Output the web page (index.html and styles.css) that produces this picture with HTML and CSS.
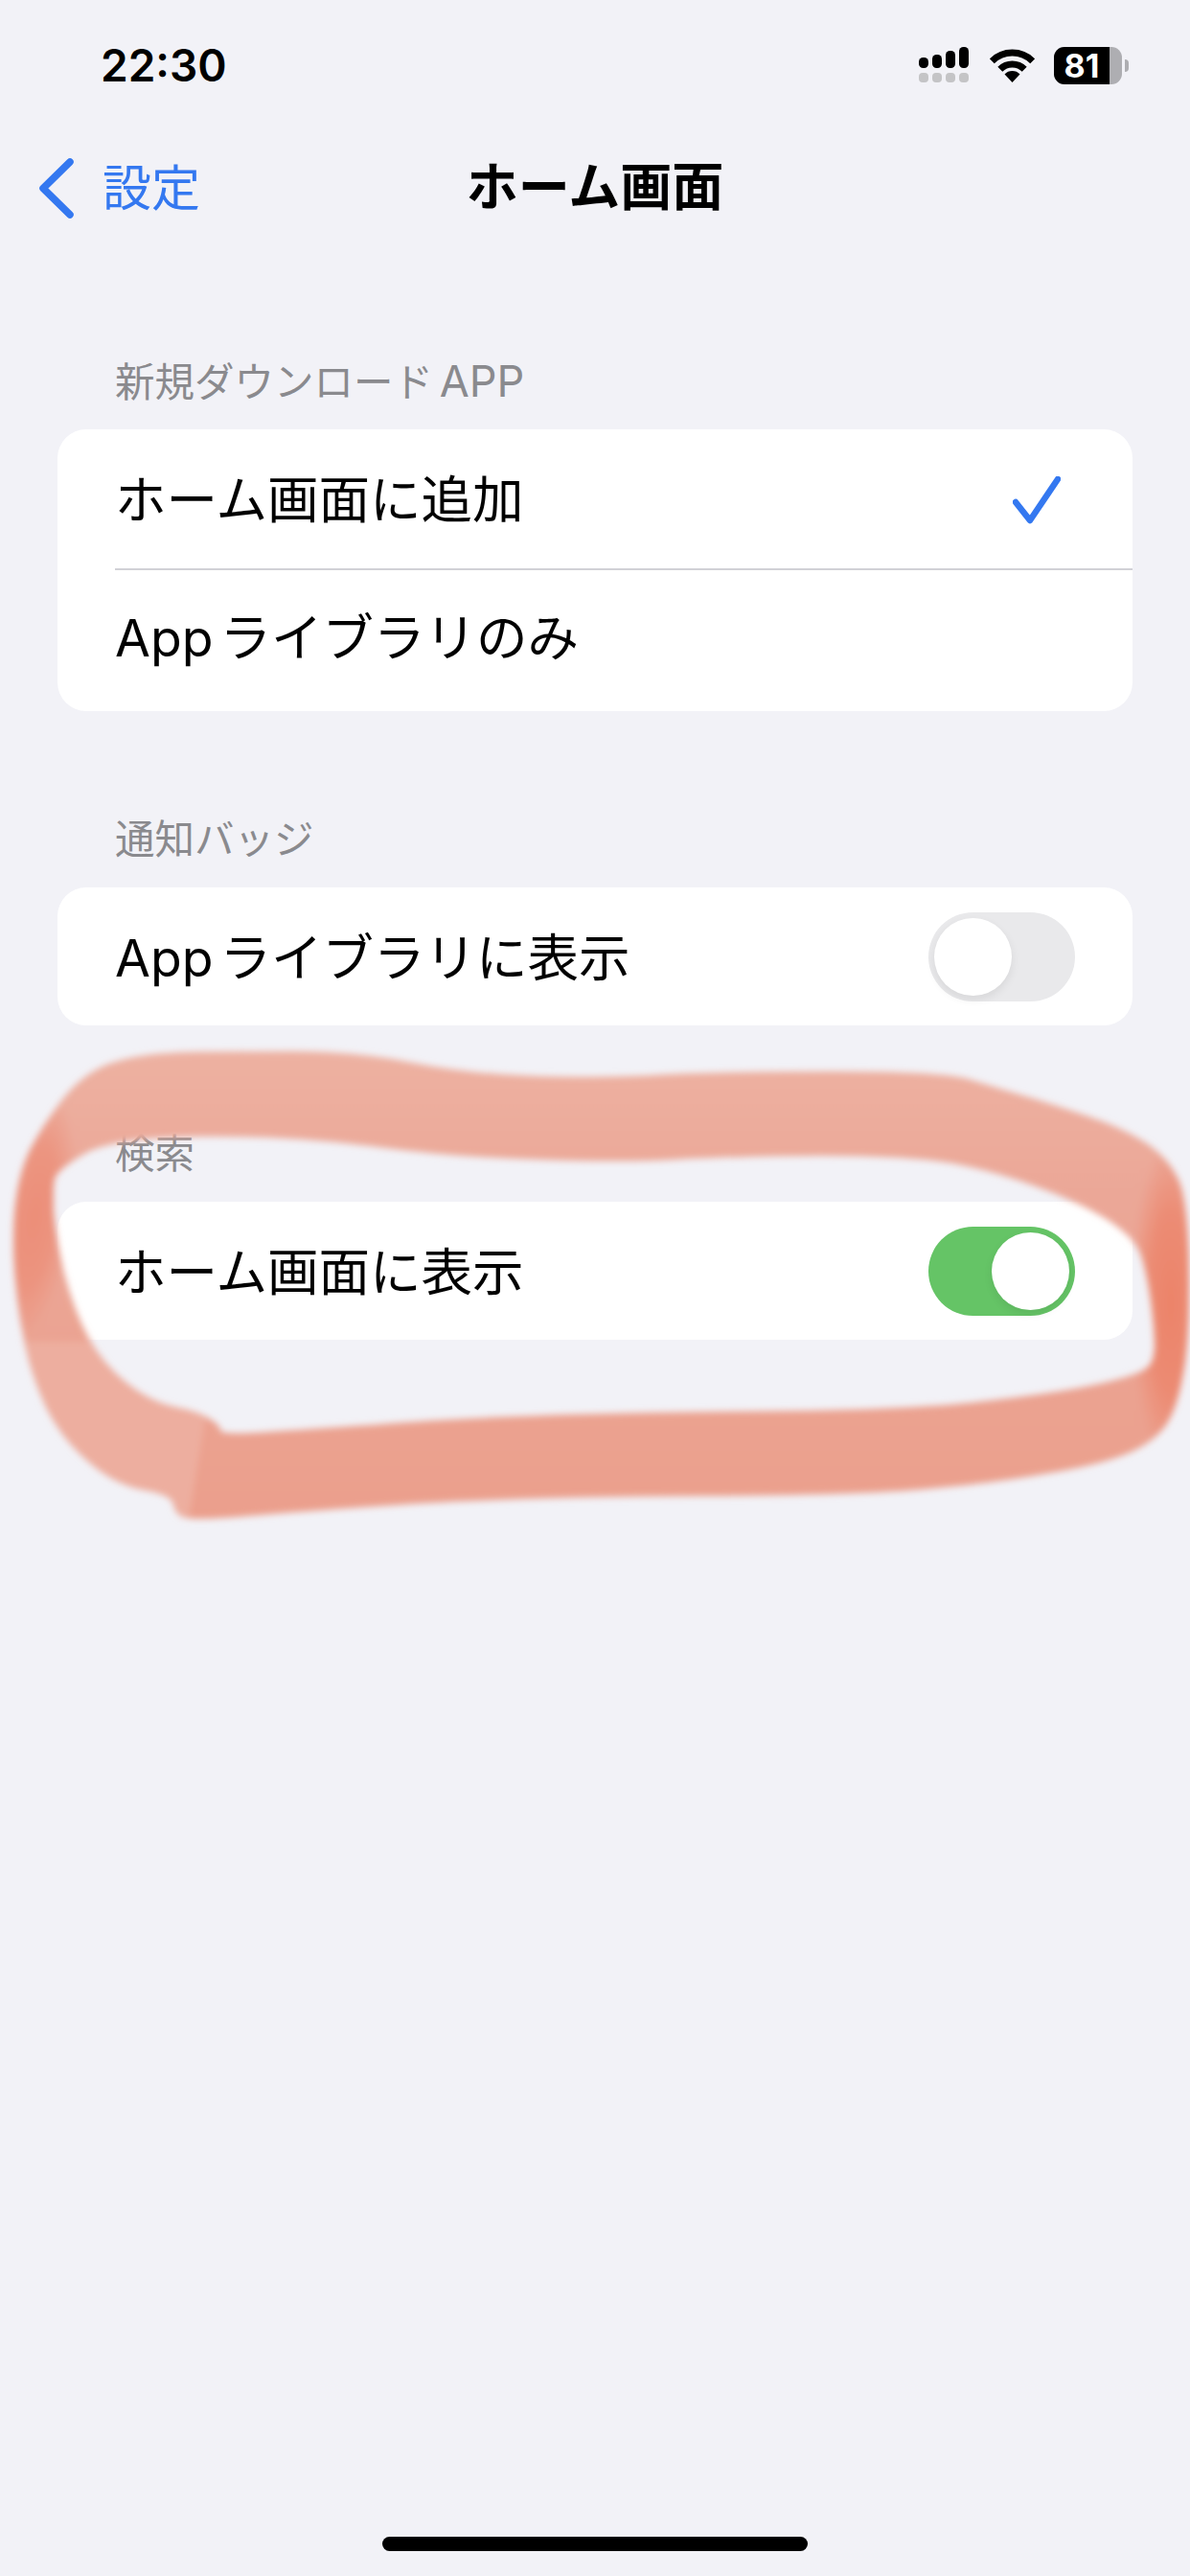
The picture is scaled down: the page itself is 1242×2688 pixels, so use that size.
FILE: index.html
```html
<!DOCTYPE html>
<html lang="ja">
<head>
    <meta charset="UTF-8">
    <meta name="viewport" content="width=device-width, initial-scale=1.0">
    <title>ホーム画面</title>
    <link rel="stylesheet" href="styles.css">
</head>
<body>
    <div class="status-bar">
        <span class="time">22:30</span>
        <div class="status-icons">
            <svg class="signal" width="52" height="38" viewBox="0 0 52 38">
                <rect x="0" y="11" width="10" height="11" rx="4.5" fill="#000"/>
                <rect x="14" y="8" width="10" height="14" rx="4.5" fill="#000"/>
                <rect x="28" y="4" width="10" height="18" rx="4.5" fill="#000"/>
                <rect x="42" y="0" width="10" height="22" rx="4.5" fill="#000"/>
                <rect x="0" y="27" width="10" height="10" rx="4" fill="#c4c4c6"/>
                <rect x="14" y="27" width="10" height="10" rx="4" fill="#c4c4c6"/>
                <rect x="28" y="27" width="10" height="10" rx="4" fill="#c4c4c6"/>
                <rect x="42" y="27" width="10" height="10" rx="4" fill="#c4c4c6"/>
            </svg>
            <svg class="wifi" width="47" height="36" viewBox="0 0 47 36">
                <path d="M2.3 13.8A30 30 0 0 1 44.7 13.8" fill="none" stroke="#000" stroke-width="7"/>
                <path d="M10.8 22.3A18 18 0 0 1 36.2 22.3" fill="none" stroke="#000" stroke-width="7"/>
                <path d="M23.5 36L15.5 27.5A11 11 0 0 1 31.5 27.5Z" fill="#000"/>
            </svg>
            <div class="battery">
                <div class="battery-body">
                    <div class="battery-level">81</div>
                </div>
                <div class="battery-nub"></div>
            </div>
        </div>
    </div>

    <div class="nav">
        <div class="nav-back">
            <svg width="37" height="63" viewBox="0 0 37 63">
                <path d="M33 4L5 31.5L33 59" fill="none" stroke="#3478f0" stroke-width="7.5" stroke-linecap="round" stroke-linejoin="round"/>
            </svg>
            <span>設定</span>
        </div>
        <h1>ホーム画面</h1>
    </div>

    <div class="section first">
        <div class="section-title">新規ダウンロード <span class="latin">APP</span></div>
        <div class="card">
            <div class="row tall">
                <span>ホーム画面に追加</span>
                <svg class="check" width="50" height="50" viewBox="0 0 50 50">
                    <path d="M3 27L18 46L47 3" fill="none" stroke="#3478f0" stroke-width="6.5" stroke-linecap="round" stroke-linejoin="round"/>
                </svg>
            </div>
            <div class="row tall">
                <span>App ライブラリのみ</span>
            </div>
        </div>
    </div>

    <div class="section">
        <div class="section-title">通知バッジ</div>
        <div class="card">
            <div class="row">
                <span>App ライブラリに表示</span>
                <div class="toggle"><div class="knob"></div></div>
            </div>
        </div>
    </div>

    <div class="section">
        <div class="section-title">検索</div>
        <div class="card">
            <div class="row">
                <span>ホーム画面に表示</span>
                <div class="toggle on"><div class="knob"></div></div>
            </div>
        </div>
    </div>

    <div class="home-indicator"></div>

    <!-- hand drawn marker circle on top of the screenshot -->
    <svg class="marker" width="1242" height="2688" viewBox="0 0 1242 2688">
        <defs>
            <filter id="soft" filterUnits="userSpaceOnUse" x="0" y="1050" width="1242" height="600">
                <feGaussianBlur stdDeviation="3.5"/>
            </filter>
            <linearGradient id="ink" gradientUnits="userSpaceOnUse" x1="0" y1="1097" x2="0" y2="1587">
                <stop offset="0" stop-color="#edb1a1"/>
                <stop offset="0.3" stop-color="#eba797"/>
                <stop offset="1" stop-color="#eb9f8c"/>
            </linearGradient>
            <radialGradient id="dark-left">
                <stop offset="0" stop-color="#ec8e78"/>
                <stop offset="0.55" stop-color="#ec8e78" stop-opacity="0.75"/>
                <stop offset="1" stop-color="#ec8e78" stop-opacity="0"/>
            </radialGradient>
            <radialGradient id="dark-right">
                <stop offset="0" stop-color="#ec8369"/>
                <stop offset="0.55" stop-color="#ec8369" stop-opacity="0.75"/>
                <stop offset="1" stop-color="#ec8369" stop-opacity="0"/>
            </radialGradient>
            <clipPath id="band">
                <path clip-rule="evenodd" d="M189 1098Q238 1097 305 1097Q372 1097 431 1109Q491 1121 562 1123Q634 1125 697 1121Q760 1118 871 1118Q982 1118 1011 1126Q1040 1135 1081 1147Q1123 1160 1153 1171Q1183 1183 1201 1196Q1220 1210 1230 1231Q1240 1253 1241 1326Q1242 1400 1234 1438Q1227 1477 1212 1493Q1197 1510 1168 1520Q1140 1530 1090 1538Q1040 1547 975 1553Q911 1560 732 1561Q554 1562 435 1569Q317 1577 258 1582Q200 1587 191 1583Q183 1580 181 1570Q180 1560 151 1555Q123 1550 98 1530Q73 1510 58 1486Q43 1463 31 1423Q20 1383 16 1336Q12 1290 16 1256Q20 1223 31 1200Q43 1177 63 1150Q83 1123 111 1111Q140 1100 189 1098Z M210 1186Q300 1185 387 1196Q475 1208 562 1210Q650 1213 705 1210Q760 1207 855 1206Q950 1206 995 1214Q1040 1223 1081 1238Q1123 1253 1153 1271Q1183 1290 1190 1308Q1197 1327 1201 1357Q1205 1387 1205 1404Q1205 1422 1196 1428Q1187 1435 1147 1444Q1107 1453 1028 1462Q950 1472 752 1473Q554 1475 427 1484Q300 1493 265 1495Q230 1497 230 1492Q230 1487 218 1480Q207 1473 182 1468Q157 1463 132 1443Q107 1423 92 1395Q77 1367 67 1328Q58 1290 56 1265Q55 1240 57 1230Q60 1220 90 1203Q120 1187 210 1186Z"/>
            </clipPath>
        </defs>
        <g filter="url(#soft)">
            <g clip-path="url(#band)">
                <rect x="0" y="1090" width="1242" height="500" fill="url(#ink)"/>
                <path d="M0 1400L100 1400L216 1470L196 1590L0 1590Z" fill="#edae9f"/>
                <ellipse cx="36" cy="1270" rx="40" ry="130" fill="url(#dark-left)" transform="rotate(8 36 1270)"/>
                <ellipse cx="1222" cy="1360" rx="42" ry="170" fill="url(#dark-right)"/>
            </g>
        </g>
    </svg>
</body>
</html>
```

FILE: styles.css
```css
body {
    font-family: 'Inter', 'Noto Sans CJK JP', sans-serif;
    background: #f2f2f7;
    margin: 0;
    width: 1242px;
    height: 2688px;
    display: flex;
    flex-direction: column;
    position: relative;
    overflow: hidden;
    color: #000;
}

.status-bar {
    height: 136px;
    display: flex;
    justify-content: space-between;
    align-items: center;
    padding: 0 64px 0 105px;
    box-sizing: border-box;
}

.time {
    font-size: 46px;
    font-weight: 600;
}

.status-icons {
    display: flex;
    align-items: center;
}

.signal {
    margin-right: 22px;
}

.wifi {
    margin-right: 20px;
}

.battery {
    display: flex;
    align-items: center;
}

.battery-body {
    width: 71px;
    height: 39px;
    background: #aeaeb2;
    border-radius: 11px;
    overflow: hidden;
}

.battery-level {
    width: 58px;
    height: 39px;
    background: #000;
    color: #fff;
    font-size: 34px;
    font-weight: 700;
    line-height: 39px;
    text-align: center;
}

.battery-nub {
    width: 4px;
    height: 13px;
    margin-left: 3px;
    background: #aeaeb2;
    border-radius: 0 4px 4px 0;
}

.nav {
    height: 120px;
    display: flex;
    align-items: center;
    justify-content: center;
    position: relative;
}

.nav h1 {
    margin: 0;
    font-size: 54px;
    line-height: 60px;
    font-weight: 700;
}

.nav-back {
    position: absolute;
    left: 40px;
    top: 29px;
    display: flex;
    align-items: center;
    gap: 30px;
    color: #3478f0;
    font-size: 51px;
    line-height: 60px;
}

.section {
    margin: 109px 60px 0;
}

.section.first {
    margin-top: 117px;
}

.section-title {
    height: 50px;
    line-height: 50px;
    margin-bottom: 25px;
    padding-left: 60px;
    font-size: 41.5px;
    word-spacing: -5px;
    color: #8a8a8e;
}

.section-title .latin {
    font-size: 45px;
}

.card {
    background: #fff;
    border-radius: 30px;
    overflow: hidden;
}

.row {
    height: 144px;
    box-sizing: border-box;
    display: flex;
    align-items: center;
    justify-content: space-between;
    margin-left: 60px;
    padding: 3px 60px 0 0;
    font-size: 53.5px;
    line-height: 60px;
    word-spacing: -8px;
}

.row.tall {
    height: 147px;
}

.row.tall:first-child {
    border-bottom: 2px solid #d1d1d6;
    padding-top: 2px;
}

.row.tall:last-child {
    padding: 0 60px 6px 0;
}

.check {
    margin-right: 15px;
}

.toggle {
    width: 153px;
    height: 93px;
    padding: 6px;
    box-sizing: border-box;
    border-radius: 47px;
    background: #e9e9eb;
    display: flex;
    margin-top: -3px;
}

.toggle.on {
    background: #65c466;
    justify-content: flex-end;
}

.knob {
    width: 81px;
    height: 81px;
    border-radius: 50%;
    background: #fff;
    box-shadow: 0 4px 10px rgba(0, 0, 0, 0.08);
}

.home-indicator {
    width: 444px;
    height: 15px;
    margin: auto auto 26px;
    background: #000;
    border-radius: 8px;
}

.marker {
    position: absolute;
    left: 0;
    top: 0;
}
```
